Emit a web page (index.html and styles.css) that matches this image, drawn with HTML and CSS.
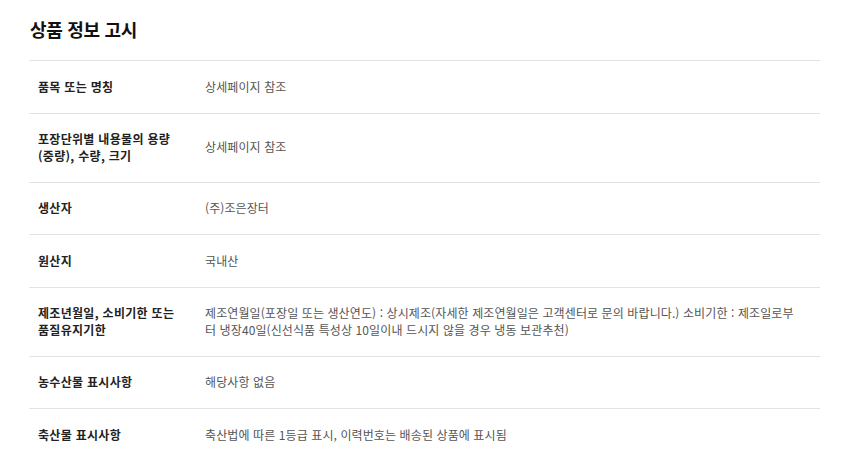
FILE: index.html
```html
<!DOCTYPE html>
<html lang="ko">
<head>
<meta charset="utf-8">
<title>상품 정보 고시</title>
<link rel="stylesheet" href="styles.css">
</head>
<body>
<section class="notice">
  <h2 class="notice-title">상품 정보 고시</h2>
  <div class="notice-table">
    <div class="row">
      <div class="label">품목 또는 명칭</div>
      <div class="value">상세페이지 참조</div>
    </div>
    <div class="row">
      <div class="label">포장단위별 내용물의 용량<br>(중량), 수량, 크기</div>
      <div class="value">상세페이지 참조</div>
    </div>
    <div class="row">
      <div class="label">생산자</div>
      <div class="value">(주)조은장터</div>
    </div>
    <div class="row">
      <div class="label">원산지</div>
      <div class="value">국내산</div>
    </div>
    <div class="row">
      <div class="label">제조년월일, 소비기한 또는<br>품질유지기한</div>
      <div class="value">제조연월일(포장일 또는 생산연도) : 상시제조(자세한 제조연월일은 고객센터로 문의 바랍니다.) 소비기한 : 제조일로부터 냉장40일(신선식품 특성상 10일이내 드시지 않을 경우 냉동 보관추천)</div>
    </div>
    <div class="row">
      <div class="label">농수산물 표시사항</div>
      <div class="value">해당사항 없음</div>
    </div>
    <div class="row">
      <div class="label">축산물 표시사항</div>
      <div class="value">축산법에 따른 1등급 표시, 이력번호는 배송된 상품에 표시됨</div>
    </div>
  </div>
</section>
</body>
</html>
```
FILE: styles.css
```css
html, body {
  margin: 0;
  padding: 0;
  background: #fff;
}
body {
  font-family: "Noto Sans CJK KR", "Noto Sans", sans-serif;
  color: #222;
}
.notice {
  margin-left: 29px;
  width: 791px;
  padding-top: 16px;
}
.notice-title {
  margin: 0 0 18px 1px;
  font-size: 18px;
  line-height: 26px;
  font-weight: 700;
  color: #111;
  letter-spacing: -0.3px;
}
.notice-table {
  border-top: 1px solid #e3e3e3;
}
.row {
  display: grid;
  grid-template-columns: 176px 1fr;
  border-bottom: 1px solid #e3e3e3;
  padding: 17.5px 0;
  align-items: center;
}
.label {
  padding-left: 9px;
  font-size: 12px;
  line-height: 16.5px;
  font-weight: 700;
  color: #222;
  letter-spacing: 0.3px;
}
.value {
  padding-right: 19px;
  font-size: 12px;
  line-height: 16.5px;
  color: #555;
  letter-spacing: 0.1px;
}
```
